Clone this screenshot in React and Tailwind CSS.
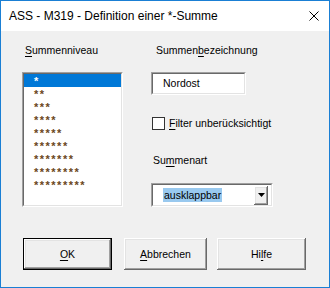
export default function App() {
  const levels = ['*', '**', '***', '****', '*****', '******', '*******', '********', '*********'];
  const raised =
    'shadow-[inset_-1px_-1px_0_#696969,inset_1px_1px_0_#ffffff,inset_-2px_-2px_0_#a0a0a0,inset_2px_2px_0_#e3e3e3]';

  return (
    <div className="w-[330px] h-[288px] border border-[#1a7fd4] bg-[#f0f0f0] flex flex-col font-['Liberation_Sans',Arial,sans-serif] text-black">
      {/* Title bar */}
      <div className="h-[30px] bg-white flex items-center justify-between pl-[8px] pr-[10px]">
        <span className="text-[12px] leading-none">ASS - M319 - Definition einer *-Summe</span>
        <svg width="10" height="10" viewBox="0 0 10 10">
          <path d="M0.5 0.5 L9.5 9.5 M9.5 0.5 L0.5 9.5" stroke="#000" strokeWidth="1" />
        </svg>
      </div>

      <div className="flex-1 text-[10.5px] leading-[13px]">
        <div className="flex pl-[21px]">
          {/* Left column */}
          <div className="w-[101px] flex flex-col">
            <div className="mt-[13px] pl-[3px]">
              <span className="underline underline-offset-[2px]">S</span>ummenniveau
            </div>
            <div className="mt-[15px] h-[135px] border border-t-[#a0a0a0] border-l-[#a0a0a0] border-b-white border-r-white">
              <div className="h-full border border-t-[#696969] border-l-[#696969] border-b-[#e3e3e3] border-r-[#e3e3e3] bg-white">
                {levels.map((l, i) => (
                  <div
                    key={l}
                    className={
                      'h-[13px] pt-[1px] pl-[10px] text-[11px] font-bold leading-[12px] tracking-[1.5px] ' +
                      (i === 0 ? 'bg-[#0078d7] text-white' : 'text-[#6a4620]')
                    }
                  >
                    {l}
                  </div>
                ))}
              </div>
            </div>
          </div>

          {/* Right column */}
          <div className="ml-[28px] flex flex-col">
            <div className="mt-[13px] pl-[5px]">
              Summen<span className="underline underline-offset-[2px]">b</span>ezeichnung
            </div>
            <div className="mt-[15px] w-[95px] h-[23px] border border-t-[#a0a0a0] border-l-[#a0a0a0] border-b-white border-r-white">
              <div className="h-full border border-t-[#696969] border-l-[#696969] border-b-[#e3e3e3] border-r-[#e3e3e3] bg-white flex items-center pl-[10px]">
                Nordost
              </div>
            </div>
            <div className="mt-[22px] flex items-center h-[13px] pl-[1px]">
              <div className="w-[13px] h-[13px] border border-[#333333] bg-white" />
              <span className="ml-[4px]">
                <span className="underline underline-offset-[2px]">F</span>ilter unberücksichtigt
              </span>
            </div>
            <div className="mt-[24px] pl-[2px]">
              Su<span className="underline underline-offset-[2px]">m</span>menart
            </div>
            <div className="mt-[16px] w-[122px] h-[24px] border border-t-[#a0a0a0] border-l-[#a0a0a0] border-b-white border-r-white">
              <div className="h-full border border-t-[#696969] border-l-[#696969] border-b-[#e3e3e3] border-r-[#e3e3e3] bg-white flex items-center justify-between pl-[10px] pr-[3px]">
                <span className="bg-[#99c9ef] px-[1px] h-[14px] leading-[14px]">ausklappbar</span>
                <div className={'w-[14px] h-[19px] bg-[#f0f0f0] flex items-center justify-center ' + raised}>
                  <svg width="7" height="4" viewBox="0 0 7 4">
                    <path d="M0 0 H7 L3.5 4 Z" fill="#000" />
                  </svg>
                </div>
              </div>
            </div>
          </div>
        </div>

        {/* Buttons */}
        <div className="mt-[31px] pl-[22px] flex text-[10.5px]">
          <div className="w-[89px] h-[32px] border border-black">
            <div className={'h-full flex items-center justify-center ' + raised}>
              <span>
                <span className="underline underline-offset-[2px]">O</span>K
              </span>
            </div>
          </div>
          <div className={'ml-[12px] w-[83px] h-[32px] flex items-center justify-center ' + raised}>
            <span>
              <span className="underline underline-offset-[2px]">A</span>bbrechen
            </span>
          </div>
          <div className={'ml-[10px] w-[89px] h-[32px] flex items-center justify-center ' + raised}>
            <span>
              Hi<span className="underline underline-offset-[2px]">l</span>fe
            </span>
          </div>
        </div>
      </div>
    </div>
  );
}
